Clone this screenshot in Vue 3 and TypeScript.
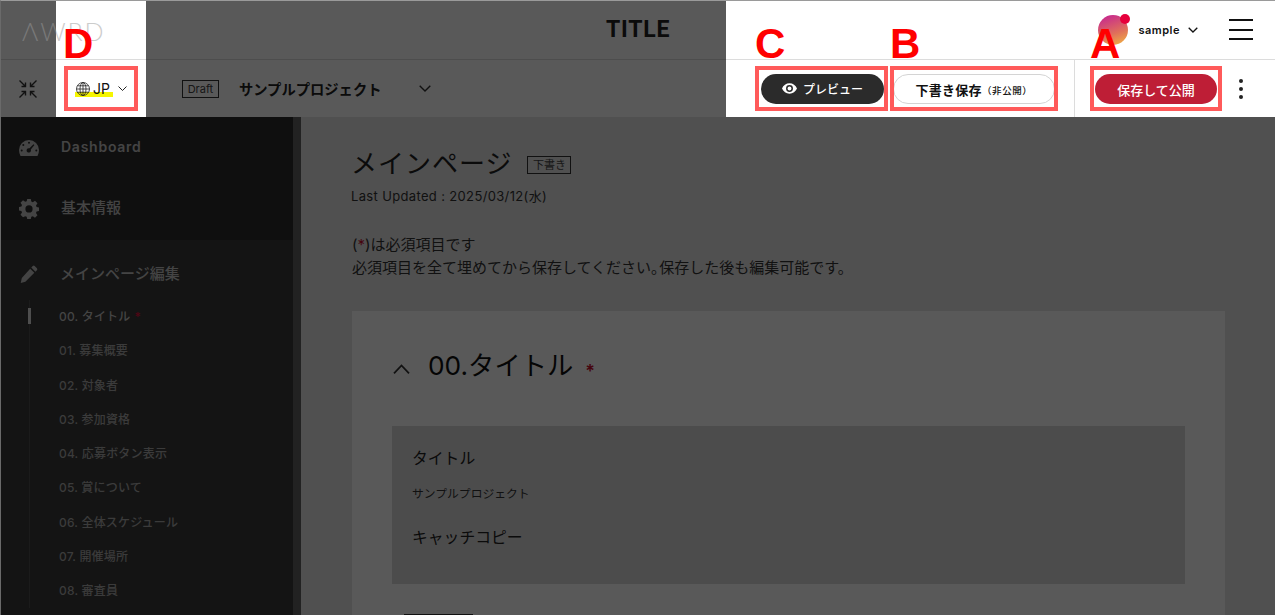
<script setup lang="ts">
const subItems: string[] = [
  '00. タイトル',
  '01. 募集概要',
  '02. 対象者',
  '03. 参加資格',
  '04. 応募ボタン表示',
  '05. 賞について',
  '06. 全体スケジュール',
  '07. 開催場所',
  '08. 審査員',
]
const notes = [
  { key: 'a', text: 'A' },
  { key: 'b', text: 'B' },
  { key: 'c', text: 'C' },
  { key: 'd', text: 'D' },
]
</script>

<template>
  <div class="page">
    <header class="head-top">
      <h1 class="title">TITLE</h1>
      <div class="user">
        <span class="avatar"><i class="avatar-dot"></i></span>
        <span class="user-name">sample</span>
        <svg class="chev-user" viewBox="0 0 10 6" width="10" height="6"><path d="M.7.7 5 5 9.3.7" fill="none" stroke="#111" stroke-width="1.3" /></svg>
        <span class="burger"><i></i><i></i><i></i></span>
      </div>
    </header>

    <div class="head-sub">
      <svg class="shrink" viewBox="0 0 20 20" width="20" height="20">
        <g fill="none" stroke="#333" stroke-width="1.4">
          <path d="M1.500 1.500 7 7M3.500 7.500h4v-4" />
          <path d="M18.500 1.500 13 7M16.500 7.500h-4v-4" />
          <path d="M1.500 18.500 7 13M3.500 12.500h4v4" />
          <path d="M18.500 18.500 13 13M16.500 12.500h-4v4" />
        </g>
      </svg>
      <div class="lang">
        <span class="lang-mark"></span>
        <svg class="globe" viewBox="0 0 14 14" width="14" height="14">
          <g fill="none" stroke="#222" stroke-width=".8">
            <circle cx="7" cy="7" r="6.5" />
            <ellipse cx="7" cy="7" rx="3" ry="6.5" />
            <path d="M7 .5v13M.5 7h13M1.4 3.8h11.2M1.4 10.2h11.2" />
          </g>
        </svg>
        <span class="lang-text">JP</span>
        <svg viewBox="0 0 9 5" width="9" height="5"><path d="M.5.5 4.5 4.5 8.5.5" fill="none" stroke="#222" stroke-width="1" /></svg>
      </div>
      <span class="draft">Draft</span>
      <strong class="project">サンプルプロジェクト</strong>
      <svg class="chev-project" viewBox="0 0 12 7" width="12" height="7"><path d="M.7.7 6 6 11.3.7" fill="none" stroke="#333" stroke-width="1.4" /></svg>

      <button class="btn btn-preview">
        <svg viewBox="0 0 16 11" width="15" height="11">
          <path d="M8 0C4.4 0 1.4 2.2 0 5.5 1.4 8.8 4.4 11 8 11s6.600-2.200 8-5.500C14.600 2.200 11.600 0 8 0Zm0 9.200a3.700 3.700 0 1 1 0-7.400 3.700 3.700 0 0 1 0 7.400Zm0-5.800a2.100 2.100 0 1 0 0 4.200 2.100 2.100 0 0 0 0-4.200Z" fill="#fff" />
        </svg>
        プレビュー
      </button>
      <button class="btn btn-draft">下書き保存<small>（非公開）</small></button>
      <div class="publish">
        <button class="btn btn-publish">保存して公開</button>
        <span class="dots"><i></i><i></i><i></i></span>
      </div>
    </div>

    <div class="body">
      <aside class="side">
        <div class="side-top">
          <svg viewBox="0 0 20 16" width="20" height="16">
            <path fill-rule="evenodd" d="M10 0a10 10 0 0 1 10 10c0 2-.5 4-1.500 6H1.500C.5 14 0 12 0 10A10 10 0 0 1 10 0Zm4.500 4.200-4 4.100a2.200 2.200 0 1 0 1.300 1.200l3.600-4.400ZM10 1.800a1 1 0 1 0 0 2 1 1 0 0 0 0-2ZM4.300 4a1 1 0 1 0 0 2 1 1 0 0 0 0-2ZM2.700 9.500a1 1 0 1 0 0 2 1 1 0 0 0 0-2Zm14.600 0a1 1 0 1 0 0 2 1 1 0 0 0 0-2Z" fill="#c2c2c2" />
          </svg>
          <span class="dash-label">Dashboard</span>
        </div>
        <div class="side-top">
          <svg viewBox="0 0 20 20" width="20" height="20">
            <path fill-rule="evenodd" d="M8.200 0h3.600l.5 2.600 1.500.6 2.200-1.500 2.500 2.500-1.500 2.200.6 1.500 2.400.5v3.600l-2.400.5-.6 1.500 1.500 2.200-2.500 2.500-2.200-1.500-1.500.6-.5 2.200H8.200l-.5-2.200-1.500-.6L4 18.200l-2.500-2.500L3 13.500l-.6-1.500L0 11.500V8l2.400-.5.6-1.500-1.500-2.200L4 1.300l2.200 1.500 1.500-.6ZM10 6.300a3.600 3.600 0 1 0 0 7.200 3.600 3.600 0 0 0 0-7.200Z" fill="#c2c2c2" />
          </svg>
          <span class="side-label lift">基本情報</span>
        </div>
        <div class="side-edit">
          <div class="edit-head">
            <svg viewBox="0 0 20 20" width="20" height="18">
              <path d="M14.200 1.200a1.500 1.500 0 0 1 2.100 0l2.500 2.500a1.500 1.500 0 0 1 0 2.100l-1.700 1.700-4.600-4.600ZM11.300 4.100l4.600 4.600L6 18.600.8 20 2 14.400Z" fill="#c2c2c2" />
            </svg>
            <span class="side-label lift-edit">メインページ編集</span>
          </div>
          <ul class="sub-list">
            <li v-for="(item, i) in subItems" :key="item" :class="{ active: i === 0 }">
              {{ item }}<span v-if="i === 0" class="req">*</span>
            </li>
          </ul>
        </div>
      </aside>
      <div class="scroll-track"></div>

      <main class="main">
        <div class="heading">
          <h2>メインページ</h2>
          <span class="tag">下書き</span>
        </div>
        <p class="updated">Last Updated : 2025/03/12(水)</p>
        <p class="notice">
          (<span class="star">*</span>)は必須項目です<br />
          必須項目を全て埋めてから保存してください<span class="tight">。</span>保存した後も編集可能です。
        </p>

        <section class="card">
          <div class="card-head">
            <svg viewBox="0 0 17 10" width="17" height="10"><path d="M1 9.300 8.500 1.500 16 9.300" fill="none" stroke="#333" stroke-width="1.800" /></svg>
            <h3>00.タイトル</h3>
            <span class="star card-star">*</span>
          </div>
          <div class="box">
            <div class="box-label">タイトル</div>
            <div class="box-value">サンプルプロジェクト</div>
            <div class="box-label catch">キャッチコピー</div>
          </div>
          <div class="next-btn"></div>
        </section>
      </main>
    </div>

    <!-- dim layer with the highlighted holes left open -->
    <div class="dim">
      <i></i><b></b><i></i><b></b>
      <i class="dim-bottom"></i>
    </div>

    <span class="logo">ΛWRD</span>

    <template v-for="n in notes" :key="n.key">
      <span class="note-letter" :class="'l-' + n.key">{{ n.text }}</span>
      <span class="note-rect" :class="'r-' + n.key"></span>
    </template>

    <div class="frame"></div>
  </div>
</template>

<style>
html, body { margin: 0; background: #595959; }
</style>

<style scoped>
* { box-sizing: border-box; }
.page {
  position: relative;
  width: 1275px;
  height: 615px;
  overflow: hidden;
  background: #fff;
  color: #333;
  font-family: "Inter", "Noto Sans CJK JP", sans-serif;
}

/* header */
.head-top {
  position: relative;
  height: 60px;
  display: flex;
  align-items: center;
  justify-content: flex-end;
  border-bottom: 1px solid #dcdcdc;
  padding-right: 22px;
}
.title {
  position: absolute;
  left: 606px;
  top: 15px;
  margin: 0;
  font: 700 23px/30px "Roboto", sans-serif;
  letter-spacing: .8px;
  color: #222;
}
.user { display: flex; align-items: center; }
.avatar {
  position: relative;
  width: 30px;
  height: 30px;
  margin-top: 1px;
  border-radius: 50%;
  background: linear-gradient(160deg, #c82c8c 10%, #e0705a 60%, #f3b840 100%);
}
.avatar-dot {
  position: absolute;
  left: 22px;
  top: -1px;
  width: 10px;
  height: 10px;
  border-radius: 50%;
  background: #e6003c;
}
.user-name {
  margin-left: 10px;
  font-size: 11px;
  font-weight: 600;
  color: #111;
  letter-spacing: .5px;
}
.chev-user { margin: 1px 31px 0 8px; }
.burger { display: flex; flex-direction: column; gap: 7.500px; width: 24px; }
.burger i { display: block; height: 2px; background: #111; }

.head-sub {
  height: 57px;
  display: flex;
  align-items: center;
}
.shrink { margin-left: 18px; }
.lang {
  position: relative;
  display: flex;
  align-items: center;
  margin-left: 38px;
  height: 20px;
  color: #111;
}
.lang-mark {
  position: absolute;
  left: -1px;
  top: 13px;
  width: 38px;
  height: 5px;
  background: #f6f600;
}
.globe { position: relative; }
.lang-text {
  position: relative;
  margin: 0 8px 0 3px;
  font-size: 14px;
  line-height: 20px;
}
.draft {
  margin-left: 55px;
  width: 37px;
  height: 18px;
  border: 1px solid #333;
  font-size: 11px;
  line-height: 16px;
  text-align: center;
  color: #444;
}
.project {
  margin-left: 20px;
  width: 180px;
  font-size: 14.300px;
  font-weight: 700;
  color: #222;
}
.chev-project { margin-right: 330px; }
.btn {
  height: 30px;
  border-radius: 15px;
  border: 0;
  font-family: inherit;
  display: flex;
  align-items: center;
  justify-content: center;
  padding: 0;
}
.btn-preview {
  width: 123px;
  gap: 6px;
  background: #2b2b2b;
  color: #fff;
  font-size: 12px;
  font-weight: 500;
}
.btn-draft {
  width: 162px;
  margin-left: 9px;
  padding-top: 2px;
  background: #fff;
  border: 1px solid #d4d4d4;
  color: #111;
  font-size: 13px;
  font-weight: 600;
  letter-spacing: .3px;
}
.btn-draft small { font-size: 9.500px; font-weight: 500; letter-spacing: .6px; }
.publish {
  display: flex;
  align-items: center;
  height: 57px;
  margin-left: 19px;
  padding-left: 20px;
  border-left: 1px solid #dcdcdc;
}
.btn-publish {
  width: 122px;
  padding-top: 2px;
  background: #be1e36;
  color: #fff;
  font-size: 13px;
  font-weight: 500;
}
.dots { display: flex; flex-direction: column; gap: 4px; margin-left: 22px; }
.dots i { width: 4px; height: 4px; border-radius: 50%; background: #222; }

/* body */
.body { display: flex; height: 498px; }
.side { width: 293px; background: #393939; overflow: hidden; }
.side-top {
  height: 61.500px;
  display: flex;
  align-items: center;
  padding-left: 19px;
  background: #2b2b2b;
}
.side-top svg, .edit-head svg { width: 20px; flex: none; }
.dash-label {
  margin-left: 22px;
  margin-bottom: 2px;
  font-size: 14px;
  font-weight: 600;
  letter-spacing: .75px;
  color: #c2c2c2;
}
.side-label {
  margin-left: 22px;
  font-size: 15px;
  font-weight: 500;
  color: #c2c2c2;
}
.side-label.lift { margin-bottom: 6px; }
.edit-head {
  display: flex;
  align-items: center;
  height: 22px;
  margin-top: 23px;
  padding-left: 19px;
}
.edit-head .side-label { margin-left: 21px; margin-bottom: 4px; }
.sub-list {
  list-style: none;
  margin: 15px 0 0 29px;
  padding: 0 0 0 29px;
  border-left: 1px solid #4d4d4d;
  color: #a8a8a8;
  font-size: 12px;
  font-weight: 500;
  letter-spacing: .2px;
}
.sub-list li { position: relative; height: 34.250px; line-height: 34.250px; }
.sub-list li.active { color: #c2c2c2; }
.sub-list li.active::before {
  content: "";
  position: absolute;
  left: -31px;
  top: 8px;
  width: 3px;
  height: 16px;
  background: #e0e0e0;
}
.req { margin-left: 4px; color: #e0103a; }

.scroll-track { width: 8px; background: #616161; }
.main { flex: 1; background: #e5e5e5; padding: 30px 50px 0 51px; overflow: hidden; }
.heading { display: flex; align-items: center; height: 32px; }
.heading h2 {
  margin: 0 0 4px -1px;
  font-size: 26px;
  font-weight: 400;
  letter-spacing: 1px;
  color: #222;
}
.tag {
  margin-left: 15px;
  margin-top: 4px;
  width: 44px;
  height: 18px;
  border: 1px solid #333;
  font-size: 11px;
  line-height: 16px;
  text-align: center;
  color: #444;
}
.updated { margin: 8px 0 0 -1px; font-size: 13px; line-height: 18px; letter-spacing: .35px; color: #333; }
.notice { margin: 28px 0 0; font-size: 15px; line-height: 23px; color: #333; }
.tight { letter-spacing: -7px; }
.star { color: #c8102e; }
.card {
  margin-top: 32px;
  height: 330px;
  background: #fff;
  padding: 38px 40px 0;
}
.card-head { display: flex; align-items: center; height: 34px; }
.card-head svg { margin-left: 1px; margin-top: 6px; }
.card-head h3 {
  margin: 0 0 6px 18px;
  font-size: 26.300px;
  font-weight: 400;
  color: #111;
}
.card-star { margin-left: 12px; margin-top: 10px; font-size: 18px; font-weight: 600; }
.box {
  height: 158px;
  margin-top: 43px;
  padding: 22px 20px 0;
  background: #d9d9d9;
}
.box-label { font-size: 15.800px; line-height: 22px; color: #222; }
.box-value { margin-top: 16px; font-size: 11.800px; line-height: 16px; color: #333; }
.box-label.catch { margin-top: 25px; }
.next-btn {
  margin: 30px 0 0 12px;
  width: 69px;
  height: 20px;
  background: #333;
}

/* overlay */
.dim {
  position: absolute;
  inset: 0;
  display: grid;
  grid-template-columns: 56px 90px 580px 1fr;
  grid-template-rows: 117px 1fr;
  pointer-events: none;
}
.dim i { background: rgba(0, 0, 0, .65); }
.dim-bottom { grid-column: 1 / -1; }
.logo {
  position: absolute;
  left: 22px;
  top: 16px;
  font: 300 25px/30px "Lato", sans-serif;
  letter-spacing: 1.800px;
  color: #9a9a9a;
  opacity: .5;
}
.note-letter {
  position: absolute;
  top: 23px;
  font: 700 42px/42px "Liberation Sans", sans-serif;
  color: #f00;
}
.l-a { left: 1090px; }
.l-b { left: 890px; }
.l-c { left: 755px; }
.l-d { left: 63px; }
.note-rect {
  position: absolute;
  top: 66px;
  height: 45px;
  border: 4px solid #ff5a5a;
}
.r-a { left: 1090px; width: 132px; }
.r-b { left: 890px; width: 168px; }
.r-c { left: 755px; width: 133px; }
.r-d { left: 64px; width: 74px; }
.frame {
  position: absolute;
  inset: 0;
  border-top: 1px solid #9a9a9a;
  border-left: 1px solid #6a6a6a;
  pointer-events: none;
}
</style>
